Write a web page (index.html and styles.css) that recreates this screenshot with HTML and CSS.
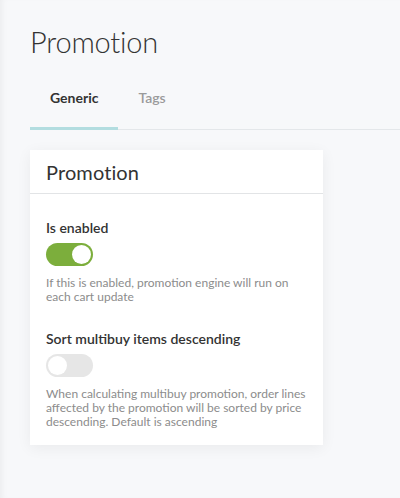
FILE: index.html
```html
<!DOCTYPE html>
<html lang="en">
<head>
<meta charset="utf-8">
<title>Promotion</title>
<link rel="stylesheet" href="styles.css">
</head>
<body>
<div class="page">
  <h1 class="page-title">Promotion</h1>
  <nav class="tabs">
    <a class="tab tab-active">Generic</a>
    <a class="tab">Tags</a>
  </nav>
  <section class="card">
    <header class="card-header">
      <h2 class="card-title">Promotion</h2>
    </header>
    <div class="card-body">
      <div class="field">
        <div class="field-label">Is enabled</div>
        <span class="toggle toggle-on"><span class="knob"></span></span>
        <p class="field-help">If this is enabled, promotion engine will run on each cart update</p>
      </div>
      <div class="field">
        <div class="field-label">Sort multibuy items descending</div>
        <span class="toggle"><span class="knob"></span></span>
        <p class="field-help">When calculating multibuy promotion, order lines affected by the promotion will be sorted by price descending. Default is ascending</p>
      </div>
    </div>
  </section>
</div>
</body>
</html>
```

FILE: styles.css
```css
html, body {
  margin: 0;
  padding: 0;
}
body {
  background: #f7f8fa;
  font-family: "Lato", "Noto Sans", sans-serif;
  color: #333;
  width: 400px;
  height: 498px;
  overflow: hidden;
  box-shadow: inset 6px 0 6px -4px rgba(0, 0, 0, 0.05);
}
.page {
  padding: 24px 0 0 30px;
}
.page-title {
  margin: 0;
  font-size: 29px;
  font-weight: 300;
  line-height: 36px;
  color: #333;
  letter-spacing: -0.2px;
}
.tabs {
  display: flex;
  margin-top: 17px;
  border-bottom: 1px solid #e4e7ea;
}
.tab {
  padding: 11px 20px 19px;
  font-size: 14px;
  line-height: 20px;
  color: #9a9a9a;
  font-weight: 600;
  border-bottom: 3px solid transparent;
  margin-bottom: -1px;
}
.tab-active {
  color: #333;
  font-weight: 700;
  border-bottom-color: #b3dde0;
}
.card {
  margin-top: 20px;
  width: 293px;
  background: #fff;
  box-shadow: 0 3px 14px rgba(0, 0, 0, 0.06);
}
.card-header {
  height: 43px;
  border-bottom: 1px solid #e2e4e6;
  display: flex;
  align-items: center;
  padding: 0 16px;
}
.card-title {
  margin: 0;
  font-size: 20px;
  font-weight: 400;
  color: #333;
  letter-spacing: 0.1px;
}
.card-body {
  padding: 24px 16px 16px;
  display: flex;
  flex-direction: column;
  gap: 25px;
}
.field {
  display: flex;
  flex-direction: column;
  align-items: flex-start;
}
.field-label {
  font-size: 14px;
  line-height: 20px;
  font-weight: 600;
  color: #333;
}
.toggle {
  margin-top: 5px;
  width: 47px;
  height: 23px;
  border-radius: 12px;
  background: #e6e6e6;
  position: relative;
  display: block;
}
.toggle-on {
  background: #7cae3c;
}
.knob {
  position: absolute;
  top: 2px;
  left: 2px;
  width: 19px;
  height: 19px;
  border-radius: 50%;
  background: #fff;
}
.toggle-on .knob {
  left: 26px;
}
.field-help {
  margin: 10px 0 0;
  font-size: 12px;
  line-height: 14px;
  color: #8c8c8c;
  letter-spacing: 0;
}
```
